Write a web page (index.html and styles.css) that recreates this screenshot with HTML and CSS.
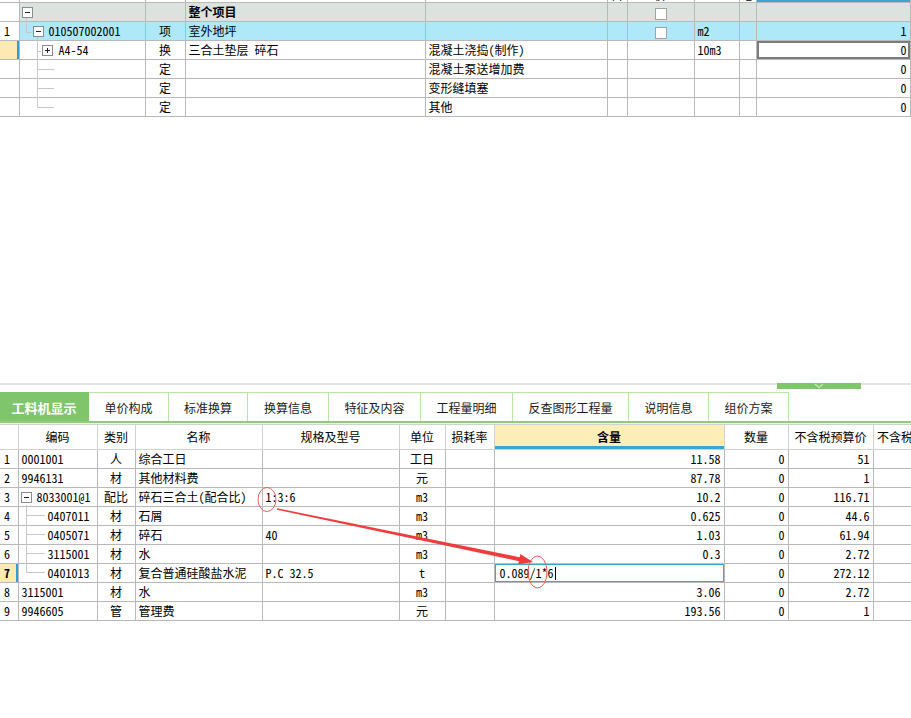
FILE: index.html
```html
<!DOCTYPE html>
<html lang="zh-CN">
<head>
  <meta charset="UTF-8">
  <title>分部分项</title>
  <link rel="stylesheet" href="styles.css">
</head>
<body>

  <div class="top-pane">
    <table class="grid top-grid">
      <colgroup>
        <col style="width:19px"><col style="width:126px"><col style="width:40px"><col style="width:240px">
        <col style="width:182px"><col style="width:20px"><col style="width:67px"><col style="width:45px">
        <col style="width:17px"><col style="width:154px">
      </colgroup>
      <tr class="head-row">
        <td class="num"></td><td></td><td></td><td></td><td></td>
        <td class="c">目</td><td class="c">价</td><td></td><td class="c">总</td><td class="sorted"></td>
      </tr>
      <tr class="group">
        <td class="num"></td>
        <td><div class="tree"><span class="tbox minus lv0"></span></div></td>
        <td></td><td><b>整个项目</b></td><td></td><td></td>
        <td class="c"><span class="chk"></span></td><td></td><td></td><td></td>
      </tr>
      <tr class="item">
        <td class="num">1</td>
        <td><div class="tree"><span class="tbox minus lv1"></span>010507002001</div></td>
        <td class="c">项</td><td>室外地坪</td><td></td><td></td>
        <td class="c"><span class="chk"></span></td><td>m2</td><td></td><td class="r">1</td>
      </tr>
      <tr>
        <td class="num mark"></td>
        <td><div class="tree"><span class="tbox plus lv2"></span>A4-54</div></td>
        <td class="c">换</td><td>三合土垫层 碎石</td><td>混凝土浇捣(制作)</td><td></td>
        <td></td><td>10m3</td><td></td><td class="r focus">0</td>
      </tr>
      <tr>
        <td class="num"></td><td></td><td class="c">定</td><td></td><td>混凝土泵送增加费</td>
        <td></td><td></td><td></td><td></td><td class="r">0</td>
      </tr>
      <tr>
        <td class="num"></td><td></td><td class="c">定</td><td></td><td>变形缝填塞</td>
        <td></td><td></td><td></td><td></td><td class="r">0</td>
      </tr>
      <tr>
        <td class="num"></td><td></td><td class="c">定</td><td></td><td>其他</td>
        <td></td><td></td><td></td><td></td><td class="r">0</td>
      </tr>
    </table>
  </div>

  <div class="splitter">
    <div class="handle">
      <svg width="84" height="6" viewBox="0 0 84 6"><polyline points="38,1 42,4.5 46,1" fill="none" stroke="#c9ebbd" stroke-width="1.2"/></svg>
    </div>
  </div>

  <div class="tabs">
    <div class="tab active" style="width:89px">工料机显示</div>
    <div class="tab" style="width:80px">单价构成</div>
    <div class="tab" style="width:79px">标准换算</div>
    <div class="tab" style="width:81px">换算信息</div>
    <div class="tab" style="width:92px">特征及内容</div>
    <div class="tab" style="width:92px">工程量明细</div>
    <div class="tab" style="width:116px">反查图形工程量</div>
    <div class="tab" style="width:80px">说明信息</div>
    <div class="tab" style="width:80px">组价方案</div>
  </div>

  <div class="bottom-pane">
    <table class="grid bottom-grid">
      <colgroup>
        <col style="width:18px"><col style="width:79px"><col style="width:38px"><col style="width:127px">
        <col style="width:137px"><col style="width:46px"><col style="width:49px"><col style="width:230px">
        <col style="width:64px"><col style="width:85px"><col style="width:80px">
      </colgroup>
      <tr class="head">
        <td class="num"></td><td>编码</td><td>类别</td><td>名称</td><td>规格及型号</td><td>单位</td>
        <td>损耗率</td><td class="hl">含量</td><td>数量</td><td>不含税预算价</td><td>不含税市场价</td>
      </tr>
      <tr>
        <td class="num">1</td><td>0001001</td><td class="c">人</td><td>综合工日</td><td></td><td class="c">工日</td>
        <td></td><td class="r">11.58</td><td class="r">0</td><td class="r">51</td><td></td>
      </tr>
      <tr>
        <td class="num">2</td><td>9946131</td><td class="c">材</td><td>其他材料费</td><td></td><td class="c">元</td>
        <td></td><td class="r">87.78</td><td class="r">0</td><td class="r">1</td><td></td>
      </tr>
      <tr>
        <td class="num">3</td><td><div class="tree"><span class="tbox minus"></span>8033001@1</div></td><td class="c">配比</td>
        <td>碎石三合土(配合比)</td><td>1:3:6</td><td class="c">m3</td>
        <td></td><td class="r">10.2</td><td class="r">0</td><td class="r">116.71</td><td></td>
      </tr>
      <tr>
        <td class="num">4</td><td class="sub">0407011</td><td class="c">材</td><td>石屑</td><td></td><td class="c">m3</td>
        <td></td><td class="r">0.625</td><td class="r">0</td><td class="r">44.6</td><td></td>
      </tr>
      <tr>
        <td class="num">5</td><td class="sub">0405071</td><td class="c">材</td><td>碎石</td><td>40</td><td class="c">m3</td>
        <td></td><td class="r">1.03</td><td class="r">0</td><td class="r">61.94</td><td></td>
      </tr>
      <tr>
        <td class="num">6</td><td class="sub">3115001</td><td class="c">材</td><td>水</td><td></td><td class="c">m3</td>
        <td></td><td class="r">0.3</td><td class="r">0</td><td class="r">2.72</td><td></td>
      </tr>
      <tr>
        <td class="num mark"><b>7</b></td><td class="sub">0401013</td><td class="c">材</td><td>复合普通硅酸盐水泥</td>
        <td>P.C 32.5</td><td class="c">t</td><td></td>
        <td class="editing">0.089/1*6<span class="caret"></span></td><td class="r">0</td><td class="r">272.12</td><td></td>
      </tr>
      <tr>
        <td class="num">8</td><td>3115001</td><td class="c">材</td><td>水</td><td></td><td class="c">m3</td>
        <td></td><td class="r">3.06</td><td class="r">0</td><td class="r">2.72</td><td></td>
      </tr>
      <tr>
        <td class="num">9</td><td>9946605</td><td class="c">管</td><td>管理费</td><td></td><td class="c">元</td>
        <td></td><td class="r">193.56</td><td class="r">0</td><td class="r">1</td><td></td>
      </tr>
    </table>
  </div>

  <!-- tree connectors and the red hand-drawn marks -->
  <svg class="overlay" width="911" height="718" viewBox="0 0 911 718">
    <g fill="none" stroke="#c8c8c8" stroke-width="1">
      <path d="M26.5 18V32.5H32"/>
      <path d="M37.5 37V107.5M37.5 51.5H41M37.5 69.5H54M37.5 88.5H54M37.5 107.5H54"/>
      <path d="M26.5 505V572.5M26.5 515.5H45M26.5 534.5H45M26.5 553.5H45M26.5 572.5H45"/>
    </g>
    <g fill="none" stroke="#f05a5a" stroke-width="1">
      <ellipse cx="267" cy="499.5" rx="9" ry="12"/>
      <ellipse cx="537.5" cy="572" rx="9.5" ry="16"/>
    </g>
    <g fill="#f03c3c">
      <polygon points="276.9,509.7 277.1,508.3 520.7,557.4 519.9,561.4"/>
      <polygon points="518.3,564.2 520.3,554.1 533,562"/>
    </g>
  </svg>

</body>
</html>
```

FILE: styles.css
```css
body {
  margin: 0;
  width: 911px;
  height: 718px;
  overflow: hidden;
  position: relative;
  background: #ffffff;
  color: #000000;
  font-family: "Noto Sans Mono CJK SC", "Noto Sans CJK SC", sans-serif;
  font-size: 12px;
}

.grid {
  border-collapse: collapse;
  table-layout: fixed;
}

.grid td {
  border: 1px solid #b9b9b9;
  height: 18px;
  padding: 0 3px;
  line-height: 18px;
  white-space: nowrap;
  overflow: hidden;
}

.grid td:first-child {
  border-left: none;
}

.grid .c { text-align: center; }
.grid .r { text-align: right; }

.grid .num {
  padding-left: 4px;
  background: #ffffff;
}

.grid .mark {
  background: #fdeab3;
  box-shadow: inset -2px 0 #2e9fd6;
}

/* upper grid */
.top-pane {
  height: 383px;
  overflow: hidden;
}

.top-grid {
  width: 910px;
  margin-top: -16px;
}

.top-grid .head-row td {
  border-top: none;
  vertical-align: bottom;
  line-height: 14px;
}

.top-grid .head-row .sorted {
  box-shadow: inset 0 -2px #3aa6d6;
}

.top-grid .group td {
  background: #dce3df;
}

.top-grid .group .num {
  background: #ffffff;
}

.top-grid .item td {
  background: #aee8f9;
}

.top-grid .item .num {
  background: #ffffff;
}

.top-grid .focus {
  box-shadow: inset 0 0 0 2px #7c7c7c;
}

.tree {
  display: flex;
  align-items: center;
  height: 18px;
}

.tbox {
  position: relative;
  width: 9px;
  height: 9px;
  border: 1px solid #8c8c8c;
  background: #ffffff;
  margin-right: 5px;
  flex: none;
}

.tbox::before {
  content: "";
  position: absolute;
  left: 2px;
  top: 4px;
  width: 5px;
  height: 1px;
  background: #222222;
}

.tbox.plus::after {
  content: "";
  position: absolute;
  left: 4px;
  top: 2px;
  width: 1px;
  height: 5px;
  background: #222222;
}

.tbox.lv0 { margin-left: -1px; }
.tbox.lv1 { margin-left: 10px; }
.tbox.lv2 { margin-left: 19px; margin-right: 6px; }

.chk {
  display: inline-block;
  width: 10px;
  height: 10px;
  border: 1px solid #a2a2a2;
  background: #ffffff;
  vertical-align: middle;
}

/* splitter and tabs */
.splitter {
  height: 9px;
  background: linear-gradient(#e3e3e3 0 2px, transparent 2px);
}

.handle {
  width: 84px;
  height: 6px;
  margin-left: 777px;
  background: #7fc56c;
}

.handle svg {
  display: block;
}

.tabs {
  display: flex;
  height: 29px;
  border-bottom: 2px solid #8ccf76;
}

.tab {
  box-sizing: border-box;
  display: flex;
  align-items: center;
  justify-content: center;
  border-top: 1px solid #b8e6a4;
  border-right: 1px solid #b8e6a4;
  color: #1a1a1a;
}

.tab.active {
  background: #7fc56c;
  border-color: #7fc56c;
  color: #ffffff;
  font-weight: bold;
  font-size: 13px;
}

/* lower grid */
.bottom-pane {
  margin-top: 1px;
  width: 911px;
  overflow: hidden;
}

.bottom-grid {
  width: 953px;
}

.bottom-grid .head td {
  height: 24px;
  line-height: 24px;
  text-align: center;
  border-color: #d2d2d2;
}

.bottom-grid .head .hl {
  background: #fdedb6;
  font-weight: bold;
  box-shadow: inset 0 -3px #3aa6d6;
}

.bottom-grid td.sub {
  padding-left: 29px;
}

.bottom-grid .tbox {
  margin-left: -1px;
}

.bottom-grid .editing {
  padding-left: 5px;
  box-shadow: inset 0 0 0 1px #3ba7d8;
}

.caret {
  display: inline-block;
  width: 1px;
  height: 13px;
  margin-left: 1px;
  background: #000000;
  vertical-align: -2px;
}

.overlay {
  position: absolute;
  left: 0;
  top: 0;
  pointer-events: none;
}
```
